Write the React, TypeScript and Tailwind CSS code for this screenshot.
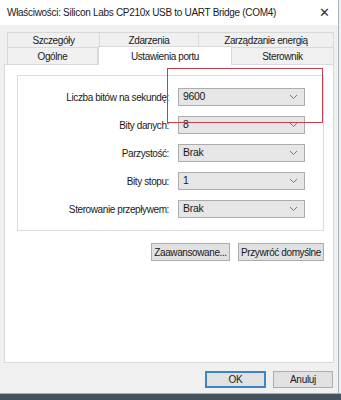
import React from "react";

const font = { fontFamily: '"Liberation Sans", Arial, sans-serif' };

function Chevron() {
  return (
    <svg width="9" height="6" viewBox="0 0 9 6" className="shrink-0">
      <path d="M1 1 L4.5 4.5 L8 1" fill="none" stroke="#7a7a7a" strokeWidth="1" />
    </svg>
  );
}

function Combo({ value }: { value: string }) {
  return (
    <div className="w-[127px] h-[18px] bg-[#e6e6e6] border border-[#acacac] flex items-center justify-between pl-[4px] pr-[6px] text-[10.5px] tracking-[-0.3px] text-[#1a1a1a] whitespace-nowrap">
      <span>{value}</span>
      <Chevron />
    </div>
  );
}

function Row({ label, value }: { label: string; value: string }) {
  return (
    <div className="flex items-center h-[18px]">
      <div className="w-[159px] text-right text-[10px] tracking-[-0.4px] text-[#1a1a1a] pr-[9px] whitespace-nowrap">{label}</div>
      <Combo value={value} />
    </div>
  );
}

export default function App() {
  return (
    <div className="w-[341px] h-[400px] bg-[#f0f0f0] relative overflow-hidden" style={font}>
      <div className="w-[339px] h-[393px] flex flex-col border-r border-[#9fb2c6]">
        {/* title bar */}
        <div className="h-[25px] bg-white flex items-center justify-between pl-[7px] pr-[8px]">
          <span className="text-[10px] tracking-[-0.3px] text-[#1a1a1a] whitespace-nowrap">Właściwości: Silicon Labs CP210x USB to UART Bridge (COM4)</span>
          <span className="text-[13px] text-[#333] leading-none">✕</span>
        </div>
        {/* tabs */}
        <div className="mt-[7px] ml-[7px] w-[327px] flex flex-col text-[10px] tracking-[-0.4px] text-[#1a1a1a] whitespace-nowrap">
          <div className="flex h-[16px]">
            <div className="w-[93px] border border-[#d9d9d9] flex items-center justify-center">Szczegóły</div>
            <div className="w-[99px] border border-l-0 border-[#d9d9d9] flex items-center justify-center">Zdarzenia</div>
            <div className="flex-1 border border-l-0 border-[#d9d9d9] flex items-center justify-center">Zarządzanie energią</div>
          </div>
          <div className="flex h-[16px] items-end">
            <div className="w-[91px] h-[16px] border border-t-0 border-b-0 border-[#d9d9d9] flex items-center justify-center">Ogólne</div>
            <div className="w-[134px] h-[19px] bg-white border border-b-0 border-[#d9d9d9] flex items-start justify-center pt-[2px] relative z-10 -mb-[1px]">Ustawienia portu</div>
            <div className="flex-1 h-[16px] border border-l-0 border-t-0 border-b-0 border-[#d9d9d9] flex items-center justify-center">Sterownik</div>
          </div>
        </div>
        {/* panel */}
        <div className="ml-[4px] w-[330px] h-[299px] bg-white border border-[#d9d9d9] pt-[10px] pl-[12px]">
          <div className="w-[307px] h-[156px] border border-[#dcdcdc] pt-[12px] flex flex-col gap-[10px] pl-[1px]">
            <Row label="Liczba bitów na sekundę:" value="9600" />
            <Row label="Bity danych:" value="8" />
            <Row label="Parzystość:" value="Brak" />
            <Row label="Bity stopu:" value="1" />
            <Row label="Sterowanie przepływem:" value="Brak" />
          </div>
          <div className="flex justify-end gap-[8px] w-[307px] mt-[12px] text-[10px] tracking-[-0.4px] text-[#1a1a1a] whitespace-nowrap">
            <div className="w-[79px] h-[18px] bg-[#e1e1e1] border border-[#adadad] flex items-center justify-center">Zaawansowane...</div>
            <div className="w-[86px] h-[18px] bg-[#e1e1e1] border border-[#adadad] flex items-center justify-center">Przywróć domyślne</div>
          </div>
        </div>
        {/* bottom buttons */}
        <div className="flex justify-end gap-[7px] pr-[5px] mt-[8px] text-[10px] tracking-[-0.3px] text-[#1a1a1a]">
          <div className="w-[61px] h-[17px] bg-[#e1e1e1] border-2 border-[#3c86c8] flex items-center justify-center">OK</div>
          <div className="w-[60px] h-[17px] bg-[#e1e1e1] border border-[#adadad] flex items-center justify-center">Anuluj</div>
        </div>
      </div>
      <div className="h-[1px] bg-[#8fb8dc]" />
      <div className="h-[6px] bg-[#46525e]" />
      {/* red annotation rectangle */}
      <div className="absolute left-[167px] top-[68px] w-[156px] h-[55px] border border-[#c4404e]" />
    </div>
  );
}
